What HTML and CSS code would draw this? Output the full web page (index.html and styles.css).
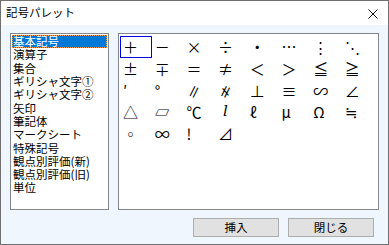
FILE: index.html
```html
<!DOCTYPE html>
<html lang="ja">
<head>
<meta charset="utf-8">
<link rel="stylesheet" href="styles.css">
</head>
<body>
<div class="window">
  <div class="titlebar">
    <span class="title">記号パレット</span>
    <svg class="close" width="10" height="10" viewBox="0 0 10 10"><path d="M0.5 0.5L9.5 9.5M9.5 0.5L0.5 9.5" stroke="#111" stroke-width="1"/></svg>
  </div>
  <div class="content">
    <div class="panes">
      <ul class="list">
        <li class="sel"><span>基本記号</span></li>
        <li><span>演算子</span></li>
        <li><span>集合</span></li>
        <li><span>ギリシャ文字①</span></li>
        <li><span>ギリシャ文字②</span></li>
        <li><span>矢印</span></li>
        <li><span>筆記体</span></li>
        <li><span>マークシート</span></li>
        <li><span>特殊記号</span></li>
        <li><span>観点別評価(新)</span></li>
        <li><span>観点別評価(旧)</span></li>
        <li><span>単位</span></li>
      </ul>
      <div class="grid">
        <span class="cell cur">＋</span><span class="cell">－</span><span class="cell">×</span><span class="cell">÷</span><span class="cell">・</span><span class="cell">…</span><span class="cell">⋮</span><span class="cell">⋱</span>
        <span class="cell">±</span><span class="cell">∓</span><span class="cell">＝</span><span class="cell">≠</span><span class="cell">＜</span><span class="cell">＞</span><span class="cell">≦</span><span class="cell">≧</span>
        <span class="cell">′</span><span class="cell">°</span><span class="cell">∥</span><span class="cell">∦</span><span class="cell">⊥</span><span class="cell">≡</span><span class="cell">∽</span><span class="cell">∠</span>
        <span class="cell">△</span><span class="cell">▱</span><span class="cell">℃</span><span class="cell it">l</span><span class="cell">ℓ</span><span class="cell">μ</span><span class="cell">Ω</span><span class="cell">≒</span>
        <span class="cell">◦</span><span class="cell">∞</span><span class="cell">!</span><span class="cell">⊿</span>
      </div>
    </div>
    <div class="buttons">
      <button class="btn">挿入</button>
      <button class="btn">閉じる</button>
    </div>
  </div>
</div>
</body>
</html>
```
FILE: styles.css
```css
html, body {
  margin: 0;
  padding: 0;
  background: #ffffff;
}
.window {
  width: 389px;
  height: 245px;
  box-sizing: border-box;
  border: 1px solid #707070;
  background: #eff6fe;
  font-family: "Noto Sans CJK JP", "DejaVu Sans", sans-serif;
  display: flex;
  flex-direction: column;
}
.titlebar {
  height: 24px;
  background: #ffffff;
  display: flex;
  align-items: center;
  justify-content: space-between;
  padding: 0 10px 0 5px;
}
.title {
  font-size: 11.5px;
  color: #000;
  line-height: 1;
  margin-top: -1px;
}
.close {
  display: block;
  margin-top: 1px;
}
.content {
  padding: 8px 9px 0 9px;
  display: flex;
  flex-direction: column;
}
.panes {
  display: flex;
  gap: 9px;
  height: 177px;
}
.list {
  list-style: none;
  margin: 0;
  padding: 1px;
  width: 99px;
  box-sizing: border-box;
  background: #fff;
  border: 1px solid #828790;
  font-size: 11.5px;
  color: #000;
}
.list li {
  height: 13.3px;
  padding-left: 1px;
  display: flex;
  align-items: center;
  white-space: nowrap;
}
.list li span {
  display: block;
  line-height: 11px;
  height: 11px;
}
.list li.sel {
  background: #0078d7;
  color: #fff;
  box-sizing: border-box;
  outline: 1px dotted #ff9d3c;
  outline-offset: -1px;
}
.grid {
  width: 261px;
  box-sizing: border-box;
  background: #fff;
  border: 1px solid #828790;
  padding: 2px 1px;
  display: grid;
  grid-template-columns: repeat(8, 31.7px);
  grid-auto-rows: 21.7px;
  align-content: start;
  font-family: "Noto Sans CJK JP", "DejaVu Serif", serif;
  font-size: 15px;
  color: #000;
}
.cell {
  display: flex;
  align-items: center;
  padding-left: 3px;
  box-sizing: border-box;
  line-height: 1;
}
.cell.cur {
  border: 1px solid #0000e6;
  padding-left: 2px;
}
.cell.it {
  font-family: "DejaVu Serif", serif;
  font-style: italic;
  padding-left: 8px;
}
.buttons {
  display: flex;
  justify-content: flex-end;
  gap: 9px;
  margin-top: 8px;
  padding-right: 5px;
}
.btn {
  width: 86px;
  height: 19px;
  box-sizing: border-box;
  border: 1px solid #adadad;
  background: #e1e1e1;
  font-family: "Noto Sans CJK JP", sans-serif;
  font-size: 11.5px;
  color: #000;
  padding: 0;
  line-height: 17px;
}
```
